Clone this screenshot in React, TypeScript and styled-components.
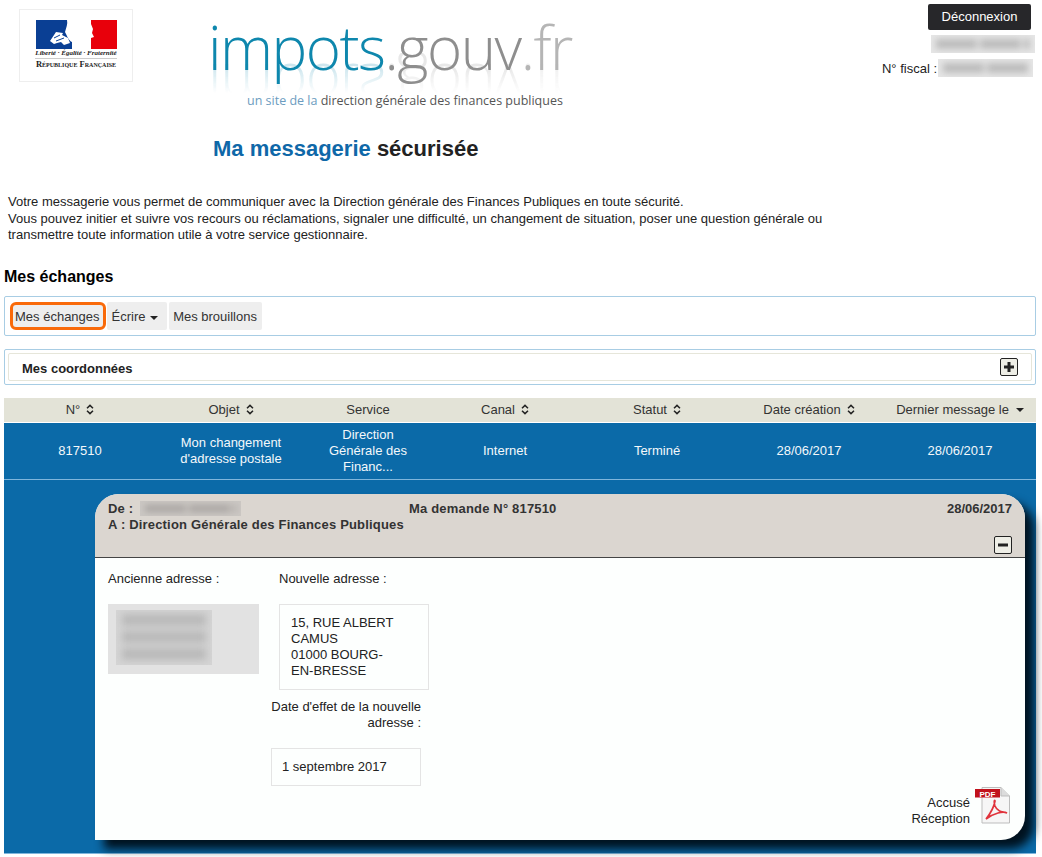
import styled, {createGlobalStyle} from "styled-components";

const GlobalStyle = createGlobalStyle`
  html, body {
    margin: 0;
    padding: 0;
    background: white;
    font-family: "Liberation Sans", Arial, sans-serif;
    font-size: 13px;
    color: #222;
  }
`

const columns = [
  {title: 'N°', value: '817510', sort: 'both'},
  {title: 'Objet', value: "Mon changement d'adresse postale", sort: 'both'},
  {title: 'Service', value: 'Direction Générale des Financ...'},
  {title: 'Canal', value: 'Internet', sort: 'both'},
  {title: 'Statut', value: 'Terminé', sort: 'both'},
  {title: 'Date création', value: '28/06/2017', sort: 'both'},
  {title: 'Dernier message le', value: '28/06/2017', sort: 'desc'},
]

const SortIcon = () => (
  <SortSvg viewBox="0 0 8 11" aria-hidden="true">
    <path d="M1 4.2 4 1.4 7 4.2M1 6.8 4 9.6 7 6.8" fill="none" stroke="#222" strokeWidth="1.5"/>
  </SortSvg>
)

const PlusIcon = () => (
  <svg width="12" height="12" viewBox="0 0 12 12" aria-hidden="true">
    <path d="M1 4.5H4.5V1H7.5V4.5H11V7.5H7.5V11H4.5V7.5H1Z" fill="#222"/>
  </svg>
)

const MinusIcon = () => (
  <svg width="12" height="12" viewBox="0 0 12 12" aria-hidden="true">
    <rect x="1" y="4.5" width="10" height="3" fill="#222"/>
  </svg>
)

const Marianne = () => (
  <svg width="81" height="29" viewBox="0 0 81 29" aria-hidden="true">
    <rect width="36" height="29" fill="#0a3f94"/>
    <rect x="55" width="26" height="29" fill="#e8000b"/>
    <path d="M36 0H31C32 4 30 8 29 12C31 16 33 21 36 22L37 29H51C55 26 53 21 55 18L58 17L56 13L57 9L55 4L53 0Z" fill="#fff"/>
    <path d="M14 21 20 12 27 13 26 15 32 18 34 23 28 25 25 22 21 23 18 24Z" fill="#fff"/>
    <path d="M18 18 24 15M20 21 28 18" stroke="#0a3f94" strokeWidth="1"/>
  </svg>
)

const PdfIcon = () => (
  <svg width="37" height="37" viewBox="0 0 37 37" aria-hidden="true">
    <path d="M9 .5H28L36.5 9V36H9Z" fill="#f6f6f6" stroke="#bdbdbd"/>
    <path d="M28 .5V9H36.5" fill="#dcdcdc" stroke="#bdbdbd"/>
    <rect x="2" y="2" width="25" height="8.5" fill="#c1121c"/>
    <text x="14.5" y="9.5" textAnchor="middle" fontSize="8" fontWeight="700" fill="#fff" fontFamily="Liberation Sans">PDF</text>
    <path d="M13 32C17 27 21 20 22 14C21 12 21 16 22 19C24 24 28 25 34 26C30 24 21 26 13 32Z" fill="none" stroke="#e0333c" strokeWidth="1.7"/>
  </svg>
)

export default function App() {
  return (
    <Page>
      <GlobalStyle/>
      <Header>
        <LogoFrame>
          <Marianne/>
          <LogoMotto>Liberté · Égalité · Fraternité</LogoMotto>
          <LogoRepublic>République Française</LogoRepublic>
        </LogoFrame>
        <Brand>
          <BrandName>
            <Teal>impots</Teal><Grey>.gouv</Grey><LightGrey>.fr</LightGrey>
          </BrandName>
          <BrandReflection aria-hidden="true">
            <Teal>impots</Teal><Grey>.gouv</Grey><LightGrey>.fr</LightGrey>
          </BrandReflection>
          <BrandTagline><TaglineBlue>un site de la</TaglineBlue> direction générale des finances publiques</BrandTagline>
        </Brand>
        <Account>
          <LogoutButton>Déconnexion</LogoutButton>
          <AccountName $width={104}/>
          <FiscalRow>
            N° fiscal :
            <Blurred $width={95}/>
          </FiscalRow>
        </Account>
      </Header>

      <PageTitle><TitleBlue>Ma messagerie</TitleBlue> sécurisée</PageTitle>

      <Intro>
        Votre messagerie vous permet de communiquer avec la Direction générale des Finances Publiques en toute sécurité.<br/>
        Vous pouvez initier et suivre vos recours ou réclamations, signaler une difficulté, un changement de situation, poser une question générale ou<br/>
        transmettre toute information utile à votre service gestionnaire.
      </Intro>

      <SectionTitle>Mes échanges</SectionTitle>

      <Toolbar>
        <ActiveTab>Mes échanges</ActiveTab>
        <DropdownTab>Écrire <Caret/></DropdownTab>
        <Tab>Mes brouillons</Tab>
      </Toolbar>

      <Accordion>
        <AccordionInner>
          <AccordionTitle>Mes coordonnées</AccordionTitle>
          <ToggleButton><PlusIcon/></ToggleButton>
        </AccordionInner>
      </Accordion>

      <TableHead>
        {columns.map((column) => (
          <HeadCell key={column.title}>
            {column.title}
            {column.sort === 'both' && <SortIcon/>}
            {column.sort === 'desc' && <Caret/>}
          </HeadCell>
        ))}
      </TableHead>
      <TableRow>
        {columns.map((column) => (
          <RowCell key={column.title}>{column.value}</RowCell>
        ))}
      </TableRow>

      <Detail>
        <Message>
          <MessageHeader>
            <MessageMeta>
              <SenderRow>De : <Blurred $width={101} $height={15} $dark/></SenderRow>
              <div>Ma demande N° 817510</div>
              <MessageDate>28/06/2017</MessageDate>
            </MessageMeta>
            <div>A : Direction Générale des Finances Publiques</div>
            <CollapseRow><ToggleButton><MinusIcon/></ToggleButton></CollapseRow>
          </MessageHeader>
          <MessageBody>
            <Addresses>
              <OldColumn>
                <FieldLabel>Ancienne adresse :</FieldLabel>
                <OldAddress>
                  <BlurredBlock/>
                </OldAddress>
              </OldColumn>
              <NewColumn>
                <FieldLabel>Nouvelle adresse :</FieldLabel>
                <NewAddress>15, RUE ALBERT CAMUS<br/>01000 BOURG-EN-BRESSE</NewAddress>
                <DateLabel>Date d'effet de la nouvelle adresse :</DateLabel>
                <DateBox>1 septembre 2017</DateBox>
              </NewColumn>
            </Addresses>
            <Receipt>
              <ReceiptLabel>Accusé<br/>Réception</ReceiptLabel>
              <PdfIcon/>
            </Receipt>
          </MessageBody>
        </Message>
      </Detail>
    </Page>
  )
}

const Page = styled.div`
  width: 1042px;
  height: 857px;
  overflow: hidden;
  box-sizing: border-box;
  padding: 0 6px 0 4px;
`

const Header = styled.header`
  display: flex;
  height: 120px;
  margin-right: -6px;
`

const LogoFrame = styled.div`
  box-sizing: border-box;
  width: 114px;
  height: 73px;
  margin: 9px 0 0 15px;
  padding-top: 10px;
  border: 1px solid #eee;
  display: flex;
  flex-direction: column;
  align-items: center;
`

const LogoMotto = styled.div`
  font-family: "Liberation Serif", serif;
  font-style: italic;
  font-size: 7px;
  font-weight: 700;
  line-height: 8px;
  padding-bottom: 1px;
  border-bottom: 1px solid #ccc;
  white-space: nowrap;
`

const LogoRepublic = styled.div`
  font-family: "Liberation Serif", serif;
  font-size: 8.5px;
  font-weight: 700;
  font-variant: small-caps;
  line-height: 10px;
  color: #222;
  white-space: nowrap;
`

const Brand = styled.div`
  position: relative;
  width: 400px;
  margin-left: 75px;
  padding-top: 13px;
`

const BrandName = styled.div`
  font-family: "Open Sans", sans-serif;
  font-weight: 300;
  font-size: 60px;
  line-height: 68px;
  letter-spacing: -1.5px;
  white-space: nowrap;
`

const BrandReflection = styled(BrandName)`
  position: absolute;
  top: 53px;
  left: 0;
  transform: scaleY(-1);
  opacity: 0.2;
  mask-image: linear-gradient(to top, black 14px, transparent 40px);
`

const Teal = styled.span`
  color: #0e87ad;
`

const Grey = styled.span`
  color: #8e8e8e;
`

const LightGrey = styled.span`
  color: #b5b5b5;
`

const BrandTagline = styled.div`
  position: relative;
  margin: 12px 0 0 39px;
  font-family: "Open Sans", sans-serif;
  font-size: 12.5px;
  line-height: 16px;
  color: #555;
  white-space: nowrap;
`

const TaglineBlue = styled.span`
  color: #6c9cc0;
`

const Account = styled.div`
  margin-left: auto;
  padding-top: 4px;
  display: flex;
  flex-direction: column;
  align-items: flex-end;
  margin-right: 7px;
`

const LogoutButton = styled.button`
  width: 103px;
  height: 26px;
  margin-right: 4px;
  padding: 0 0 2px;
  border: none;
  border-radius: 2px;
  background: #27272a;
  color: white;
  font: 13px "Liberation Sans", sans-serif;
`

const Blurred = styled.span<{$width: number; $height?: number; $dark?: boolean}>`
  position: relative;
  display: inline-block;
  overflow: hidden;
  width: ${props => props.$width}px;
  height: ${props => props.$height || 18}px;
  background: ${props => props.$dark ? '#cbc7c3' : '#e6e6e6'};

  &::after {
    content: '';
    position: absolute;
    inset: 4px 5px;
    background: repeating-linear-gradient(90deg, ${props => props.$dark ? '#aaa6a3' : '#bdbdbd'} 0 41px, transparent 41px 44px);
    filter: blur(3px);
  }
`

const AccountName = styled(Blurred)`
  margin-top: 5px;
`

const FiscalRow = styled.div`
  display: flex;
  align-items: center;
  gap: 1px;
  margin: 6px 2px 0 0;
  white-space: pre;
`

const PageTitle = styled.h1`
  margin: 15px 0 0 209px;
  font-size: 22px;
  line-height: 28px;
  font-weight: 700;
  color: #222;
`

const TitleBlue = styled.span`
  color: #0f68a8;
`

const Intro = styled.p`
  margin: 31px 0 0 4px;
  line-height: 16.5px;
  color: #222;
`

const SectionTitle = styled.h2`
  margin: 23px 0 0;
  font-size: 16px;
  line-height: 20px;
  color: #000;
`

const Toolbar = styled.nav`
  box-sizing: border-box;
  height: 40px;
  margin-top: 9px;
  padding: 5px;
  border: 1px solid #a8cde4;
  border-radius: 2px;
  display: flex;
  gap: 2px;
`

const Tab = styled.button`
  height: 28px;
  padding: 2px 5px 0 4px;
  border: none;
  border-radius: 2px;
  background: #eee;
  color: #333;
  font: 13px "Liberation Sans", sans-serif;
`

const ActiveTab = styled(Tab)`
  box-sizing: border-box;
  border: 3px solid #f96a0a;
  border-radius: 6px;
  margin-right: -1px;
  padding: 2px 3px 0 2px;
`

const DropdownTab = styled(Tab)`
  padding: 2px 9px 0 5px;
`

const Caret = styled.i`
  display: inline-block;
  vertical-align: middle;
  margin-left: 1px;
  border-top: 4px solid #222;
  border-left: 4px solid transparent;
  border-right: 4px solid transparent;
`

const Accordion = styled.section`
  box-sizing: border-box;
  height: 36px;
  margin-top: 13px;
  padding: 3px;
  border: 1px solid #a8cde4;
  border-radius: 2px;
`

const AccordionInner = styled.div`
  box-sizing: border-box;
  height: 28px;
  padding: 0 13px;
  border: 1px solid #e6e6da;
  border-radius: 2px;
  display: flex;
  align-items: center;
  justify-content: space-between;
`

const AccordionTitle = styled.strong`
  padding-top: 3px;
`

const ToggleButton = styled.button`
  box-sizing: border-box;
  width: 18px;
  height: 18px;
  padding: 0;
  border: 1px solid #222;
  border-radius: 2px;
  background: #eeeee6;
  display: flex;
  align-items: center;
  justify-content: center;
`

const gridColumns = '152px 150px 124px 150px 154px 150px 152px'

const TableHead = styled.div`
  display: grid;
  grid-template-columns: ${gridColumns};
  height: 24px;
  margin-top: 13px;
  background: #e3e3d7;
`

const HeadCell = styled.div`
  display: flex;
  align-items: center;
  justify-content: center;
  gap: 6px;
  color: #333;
  white-space: nowrap;
`

const SortSvg = styled.svg`
  width: 8px;
  height: 11px;
`

const TableRow = styled.div`
  display: grid;
  grid-template-columns: ${gridColumns};
  height: 57px;
  margin-top: 1px;
  background: #0b6aa8;
  border-bottom: 1px solid #7fb6dc;
  box-sizing: border-box;
`

const RowCell = styled.div`
  display: flex;
  align-items: center;
  justify-content: center;
  padding: 0 20px;
  text-align: center;
  line-height: 16px;
  color: #f4f8fb;
`

const Detail = styled.div`
  box-sizing: border-box;
  height: 374px;
  padding: 14px 11px 0 91px;
  background: #0b6aa8;
  border-bottom: 1px solid #7fb6dc;
`

const Message = styled.article`
  height: 346px;
  border-radius: 24px 24px 24px 0;
  background: #fdfffe;
  box-shadow: 9px 9px 10px #00121f;
  display: flex;
  flex-direction: column;
`

const MessageHeader = styled.header`
  box-sizing: border-box;
  height: 64px;
  padding: 7px 13px 0;
  border-radius: 24px 24px 0 0;
  border-bottom: 1px solid #444;
  background: #dbd6d0;
  font-weight: 700;
  line-height: 16px;
  letter-spacing: 0.18px;
  color: #333;
`

const MessageMeta = styled.div`
  display: grid;
  grid-template-columns: 301px 1fr auto;
`

const MessageDate = styled.div`
  letter-spacing: 0;
`

const SenderRow = styled.div`
  display: flex;
  align-items: center;
  gap: 3px;
  white-space: pre;
`

const CollapseRow = styled.div`
  display: flex;
  justify-content: flex-end;
  margin-top: 3px;
`

const MessageBody = styled.div`
  flex: 1;
  padding: 13px 15px 13px 13px;
  display: flex;
  flex-direction: column;
`

const Addresses = styled.div`
  display: flex;
  gap: 20px;
`

const OldColumn = styled.div`
  width: 151px;
`

const NewColumn = styled.div`
  width: 150px;
`

const FieldLabel = styled.div`
  height: 33px;
  line-height: 16px;
`

const OldAddress = styled.div`
  box-sizing: border-box;
  height: 70px;
  padding: 6px 47px 9px 8px;
  background: #e2e2e2;
  overflow: hidden;
`

const BlurredBlock = styled.div`
  position: relative;
  height: 100%;
  overflow: hidden;
  background: #d4d4d4;

  &::after {
    content: '';
    position: absolute;
    inset: 4px 6px;
    background: repeating-linear-gradient(#bababa 0 12px, transparent 12px 17px);
    filter: blur(3.5px);
  }
`

const NewAddress = styled.div`
  box-sizing: border-box;
  width: 150px;
  height: 86px;
  padding: 10px 30px 10px 11px;
  border: 1px solid #e4e4e4;
  line-height: 16px;
`

const DateLabel = styled.div`
  width: 150px;
  margin: 9px 0 0 -8px;
  text-align: right;
  line-height: 16px;
`

const DateBox = styled.div`
  box-sizing: border-box;
  width: 150px;
  height: 38px;
  margin: 17px 0 0 -8px;
  padding: 0 10px;
  border: 1px solid #e4e4e4;
  display: flex;
  align-items: center;
`

const Receipt = styled.div`
  display: flex;
  justify-content: flex-end;
  align-items: flex-start;
  gap: 3px;
  margin-top: auto;
`

const ReceiptLabel = styled.div`
  margin-top: 8px;
  text-align: right;
  line-height: 16px;
`
